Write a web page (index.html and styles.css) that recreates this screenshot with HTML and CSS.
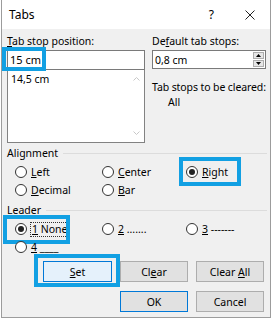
FILE: index.html
```html
<!DOCTYPE html>
<html lang="en">
<head>
  <meta charset="UTF-8">
  <title>Tabs</title>
  <link rel="stylesheet" href="styles.css">
</head>
<body>

  <div class="dialog">
    <div class="titlebar">
      <span class="title">Tabs</span>
      <span class="help">?</span>
      <svg class="close" width="10" height="10" viewBox="0 0 10 10">
        <path d="M0.5 0.5 L9.5 9.5 M9.5 0.5 L0.5 9.5" stroke="#222" stroke-width="1" fill="none"/>
      </svg>
    </div>

    <div class="content">
      <div class="top">
        <div class="col">
          <div class="label"><u>T</u>ab stop position:</div>
          <div class="field-wrap">
            <div class="input">15 cm</div>
            <span class="mark mark-pos"></span>
          </div>
          <div class="listbox">
            <div class="item">14,5 cm</div>
            <div class="scroll">
              <svg width="7" height="4" viewBox="0 0 7 4"><path d="M0.5 3.5 L3.5 0.5 L6.5 3.5" stroke="#c8c8c8" fill="none"/></svg>
              <svg width="7" height="4" viewBox="0 0 7 4"><path d="M0.5 0.5 L3.5 3.5 L6.5 0.5" stroke="#c8c8c8" fill="none"/></svg>
            </div>
          </div>
        </div>
        <div class="col">
          <div class="label">De<u>f</u>ault tab stops:</div>
          <div class="spin">
            <span class="spin-value">0,8 cm</span>
            <div class="spin-btns">
              <span class="spin-btn"><svg width="5" height="3" viewBox="0 0 5 3"><path d="M0 3 L2.5 0 L5 3 Z" fill="#000"/></svg></span>
              <span class="spin-btn"><svg width="5" height="3" viewBox="0 0 5 3"><path d="M0 0 L5 0 L2.5 3 Z" fill="#000"/></svg></span>
            </div>
          </div>
          <div class="clear-label">Tab stops to be cleared:</div>
          <div class="clear-value">All</div>
        </div>
      </div>

      <div class="group-head"><span>Alignment</span><span class="rule"></span></div>
      <div class="options">
        <div class="opt"><span class="radio"></span><span><u>L</u>eft</span></div>
        <div class="opt"><span class="radio"></span><span><u>C</u>enter</span></div>
        <div class="opt"><span class="radio checked"></span><span><u>R</u>ight</span><span class="mark mark-right"></span></div>
        <div class="opt"><span class="radio"></span><span><u>D</u>ecimal</span></div>
        <div class="opt"><span class="radio"></span><span><u>B</u>ar</span></div>
      </div>

      <div class="group-head leader-head"><span>Leader</span><span class="rule"></span></div>
      <div class="options">
        <div class="opt"><span class="radio checked"></span><span class="focus"><u>1</u> None</span><span class="mark mark-none"></span></div>
        <div class="opt"><span class="radio"></span><span><u>2</u> .......</span></div>
        <div class="opt"><span class="radio"></span><span><u>3</u> -------</span></div>
        <div class="opt"><span class="radio"></span><span><u>4</u> ____</span></div>
      </div>

      <div class="buttons">
        <div class="btn btn-set"><span><u>S</u>et</span><span class="mark mark-set"></span></div>
        <div class="btn"><span>Cl<u>e</u>ar</span></div>
        <div class="btn"><span>Clear <u>A</u>ll</span></div>
        <div class="btn btn-default btn-ok"><span>OK</span></div>
        <div class="btn"><span>Cancel</span></div>
      </div>
    </div>
  </div>

</body>
</html>
```

FILE: styles.css
```css
body {
  margin: 0;
  background: #fff;
  font-family: "Noto Sans", "Open Sans", sans-serif;
  font-size: 10.5px;
  color: #000;
}

.dialog {
  margin-left: 1px;
  width: 270px;
  height: 318px;
  box-sizing: border-box;
  border: 1px solid #9c9c9c;
  border-top: none;
  background: #f0f0f0;
}

.titlebar {
  height: 29px;
  background: #fff;
  display: flex;
  align-items: center;
  padding: 0 15px 0 7px;
  font-size: 12px;
}

.title {
  flex: 1;
}

.help {
  margin-right: 31px;
}

.content {
  padding: 5px 3px 0 5px;
}

.top {
  display: grid;
  grid-template-columns: 138px 114px;
  column-gap: 7px;
}

.label {
  line-height: 15px;
}

u {
  text-underline-offset: 1px;
}

.field-wrap {
  position: relative;
  margin-top: 1px;
}

.input {
  height: 20px;
  box-sizing: border-box;
  border: 1px solid #7a7a7a;
  background: #fff;
  padding-left: 2px;
  line-height: 18px;
  font-size: 11px;
}

.listbox {
  height: 73px;
  box-sizing: border-box;
  border: 1px solid #828282;
  border-top: none;
  background: #fff;
  display: flex;
}

.item {
  flex: 1;
  padding: 2px 0 0 3px;
  line-height: 15px;
}

.scroll {
  width: 16px;
  display: flex;
  flex-direction: column;
  justify-content: space-between;
  align-items: center;
  padding: 7px 0 7px;
}

.scroll svg {
  display: block;
}

.spin {
  margin-top: 1px;
  height: 19px;
  box-sizing: border-box;
  border: 1px solid #7a7a7a;
  background: #fff;
  display: flex;
  align-items: center;
  padding-left: 2px;
}

.spin-value {
  flex: 1;
}

.spin-btns {
  display: flex;
  flex-direction: column;
  gap: 1px;
  margin-right: 1px;
}

.spin-btn {
  width: 11px;
  height: 7px;
  box-sizing: border-box;
  border: 1px solid #adadad;
  background: #e6e6e6;
  display: flex;
  align-items: center;
  justify-content: center;
}

.spin-btn svg {
  display: block;
}

.clear-label {
  margin-top: 11px;
  line-height: 15px;
  white-space: nowrap;
  letter-spacing: -0.1px;
}

.clear-value {
  padding-left: 16px;
  line-height: 15px;
}

.group-head {
  display: flex;
  align-items: center;
  margin-top: 3px;
  line-height: 15px;
}

.leader-head {
  margin-top: 4px;
}

.rule {
  flex: 1;
  height: 1px;
  background: #dcdcdc;
  margin-left: 5px;
}

.options {
  display: grid;
  grid-template-columns: 87px 84px auto;
  grid-auto-rows: 18px;
  margin-top: 2px;
  padding-left: 8px;
}

.opt {
  position: relative;
  display: flex;
  align-items: center;
  gap: 4px;
}

.radio {
  width: 12px;
  height: 12px;
  box-sizing: border-box;
  border: 1px solid #333;
  border-radius: 50%;
  background: #fff;
  display: flex;
  align-items: center;
  justify-content: center;
}

.radio.checked::after {
  content: "";
  width: 6px;
  height: 6px;
  border-radius: 50%;
  background: #222;
}

.focus {
  outline: 1px dotted #333;
  outline-offset: 0;
  padding: 0 1px;
  line-height: 13px;
}

.buttons {
  display: grid;
  grid-template-columns: 69px 68px 68px;
  grid-auto-rows: 21px;
  column-gap: 8px;
  row-gap: 9px;
  margin-top: 5px;
  padding-left: 36px;
}

.btn {
  position: relative;
  box-sizing: border-box;
  border: 1px solid #adadad;
  background: #e1e1e1;
  display: flex;
  align-items: center;
  justify-content: center;
}

.btn-default {
  border-color: #0078d7;
}

.btn-set {
  border: 1px solid #0078d7;
  background: #e5f1fb;
}

.btn-ok {
  grid-column: 2;
}

.mark {
  position: absolute;
  box-sizing: border-box;
  border: 4px solid #12a0e3;
  pointer-events: none;
}

.mark-pos {
  left: -5px;
  top: -3px;
  width: 44px;
  height: 24px;
}

.mark-right {
  left: -7px;
  top: -6px;
  width: 62px;
  height: 29px;
}

.mark-none {
  left: -12px;
  top: -5px;
  width: 67px;
  height: 29px;
}

.mark-set {
  left: -10px;
  top: -8px;
  width: 86px;
  height: 33px;
}
```
